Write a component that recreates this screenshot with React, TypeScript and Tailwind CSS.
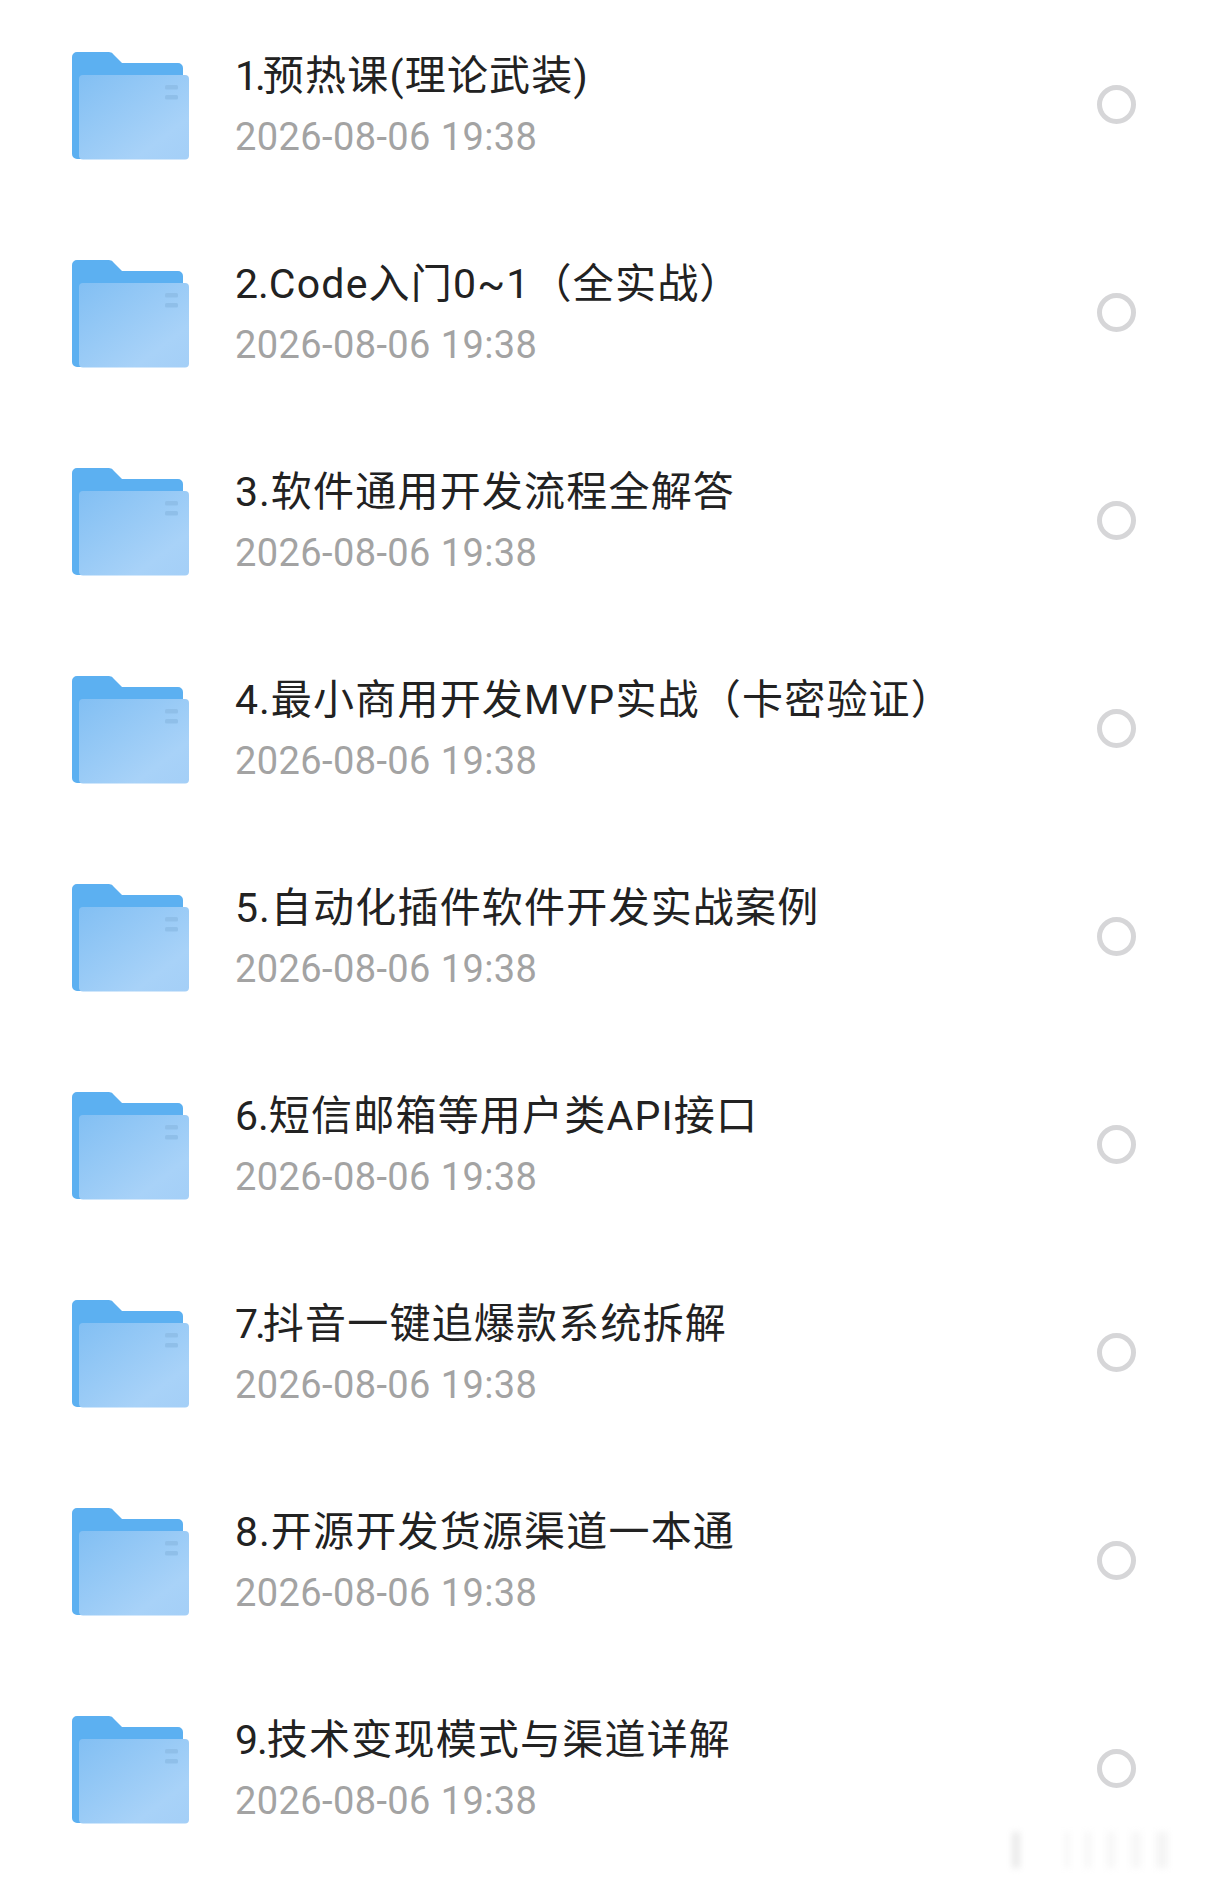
const items = [
  { no: "1.", name: "预热课(理论武装)", kern: "tracking-[-3px]" },
  { no: "2.", name: "Code入门0~1（全实战）", kern: "tracking-[0px]" },
  { no: "3.", name: "软件通用开发流程全解答", kern: "tracking-[1px]" },
  { no: "4.", name: "最小商用开发MVP实战（卡密验证）", kern: "tracking-[1px]" },
  { no: "5.", name: "自动化插件软件开发实战案例", kern: "tracking-[1px]" },
  { no: "6.", name: "短信邮箱等用户类API接口", kern: "tracking-[0px]" },
  { no: "7.", name: "抖音一键追爆款系统拆解", kern: "tracking-[-3px]" },
  { no: "8.", name: "开源开发货源渠道一本通", kern: "tracking-[1px]" },
  { no: "9.", name: "技术变现模式与渠道详解", kern: "tracking-[-1px]" },
];

function FolderIcon({ id }: { id: number }) {
  return (
    <svg width="118" height="108" viewBox="0 0 118 108" className="mt-[2px] shrink-0">
      <defs>
        <linearGradient id={`front${id}`} x1="0" y1="0" x2="1" y2="1">
          <stop offset="0" stopColor="#82bff3" />
          <stop offset="0.75" stopColor="#a8d2f8" />
          <stop offset="1" stopColor="#a4cff7" />
        </linearGradient>
      </defs>
      <path
        d="M5 0H37a6 6 0 0 1 5 3L50 11H106a5 5 0 0 1 5 5V107H5a5 5 0 0 1-5-5V5a5 5 0 0 1 5-5Z"
        fill="#5cb0f1"
      />
      <rect x="7" y="23" width="110" height="84.500" rx="4" fill={`url(#front${id})`} />
      <rect x="93" y="33" width="13" height="4.500" rx="1.500" fill="#8fbfe9" />
      <rect x="93" y="43" width="13" height="4.500" rx="1.500" fill="#8fbfe9" />
    </svg>
  );
}

function Row({ no, name, kern, id }: { no: string; name: string; kern: string; id: number }) {
  return (
    <div className="flex h-[208px] items-center pl-[72px] pr-[84px]">
      <FolderIcon id={id} />
      <div className="ml-[45px] flex min-w-0 flex-1 flex-col pt-[2px]">
        <div className="h-[52px] text-[41px] leading-[52px] tracking-[1.2px] whitespace-nowrap text-[#222222]">
          <span className={kern}>{no}</span>
          {name}
        </div>
        <div className="mt-[10px] h-[50px] text-[38px] leading-[50px] font-normal tracking-[0.4px] text-[#a3a3a3]">
          2026-08-06 19:38
        </div>
      </div>
      <div className="mb-[2px] h-[39px] w-[39px] shrink-0 rounded-full border-[5px] border-[#d6d6d8]" />
    </div>
  );
}

export default function App() {
  return (
    <div
      className="relative h-[1880px] w-[1220px] overflow-hidden bg-white"
      style={{ fontFamily: 'Roboto, "Noto Sans CJK SC", sans-serif' }}
    >
      <div className="pt-px">
        {items.map((item, i) => (
          <Row key={item.no} {...item} id={i} />
        ))}
      </div>
      {/* blurred watermark in the corner */}
      <div className="absolute top-[1832px] left-[1000px] flex h-[36px] w-[208px] items-stretch gap-[14px] blur-[3px]">
        <div className="ml-[12px] w-[8px] bg-[#eaeaea]" />
        <div className="ml-[30px] w-[6px] bg-[#f8f8f8]" />
        <div className="w-[8px] bg-[#f8f8f8]" />
        <div className="w-[10px] bg-[#f8f8f8]" />
        <div className="w-[12px] bg-[#f8f8f8]" />
        <div className="w-[12px] bg-[#f5f5f5]" />
      </div>
    </div>
  );
}
